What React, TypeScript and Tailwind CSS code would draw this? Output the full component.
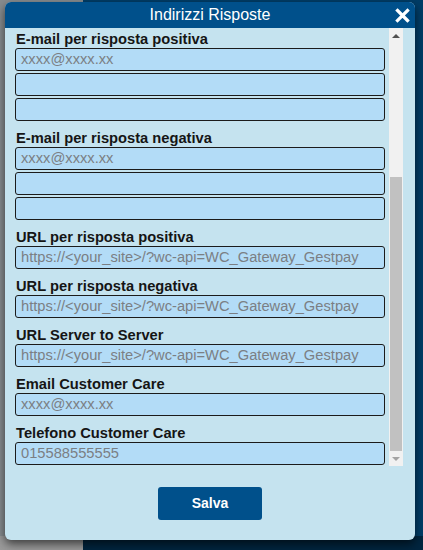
const font = { fontFamily: '"Liberation Sans", Arial, sans-serif' };

const groups: { label: string; inputs: string[] }[] = [
  { label: "E-mail per risposta positiva", inputs: ["xxxx@xxxx.xx", "", ""] },
  { label: "E-mail per risposta negativa", inputs: ["xxxx@xxxx.xx", "", ""] },
  { label: "URL per risposta positiva", inputs: ["https://<your_site>/?wc-api=WC_Gateway_Gestpay"] },
  { label: "URL per risposta negativa", inputs: ["https://<your_site>/?wc-api=WC_Gateway_Gestpay"] },
  { label: "URL Server to Server", inputs: ["https://<your_site>/?wc-api=WC_Gateway_Gestpay"] },
  { label: "Email Customer Care", inputs: ["xxxx@xxxx.xx"] },
  { label: "Telefono Customer Care", inputs: ["015588555555"] },
];

function Input({ placeholder }: { placeholder: string }) {
  return (
    <div className="h-[23px] shrink-0 rounded-[3px] border border-[#1b1b1b] bg-[#b3dcf7] px-[5px] flex items-center text-[14.7px] text-[#7b7f84] whitespace-nowrap overflow-hidden">
      {placeholder}
    </div>
  );
}

function Scrollbar() {
  return (
    <div className="w-[14px] h-[438px] bg-[#f1f1f1] flex flex-col items-center">
      <div className="h-[15px] flex items-center justify-center">
        <div className="w-0 h-0 border-l-[4px] border-r-[4px] border-b-[4px] border-l-transparent border-r-transparent border-b-[#505050]" />
      </div>
      <div className="flex-1 w-full flex flex-col justify-end">
        <div className="h-[274px] w-[12px] mx-auto bg-[#c1c1c1]" />
      </div>
      <div className="h-[15px] flex items-center justify-center">
        <div className="w-0 h-0 border-l-[4px] border-r-[4px] border-t-[4px] border-l-transparent border-r-transparent border-t-[#a3a3a3]" />
      </div>
    </div>
  );
}

export default function App() {
  return (
    <div
      className="relative w-[423px] h-[550px] overflow-hidden bg-[linear-gradient(to_right,#868b8e_83px,#003c66_83px)]"
      style={font}
    >
      <div className="absolute left-0 right-0 bottom-0 h-[14px] bg-[linear-gradient(to_right,#9a9a9a_83px,#00253f_83px)]" />
      <div className="absolute left-[5px] top-[2px] w-[410px] h-[538px] rounded-[6px] bg-[#c5e3ef] shadow-[0_4px_10px_rgba(0,0,0,0.6)] flex flex-col">
        <div className="h-[26px] rounded-t-[6px] bg-[#00508b] relative flex items-center justify-center">
          <span className="text-white text-[16px]">Indirizzi Risposte</span>
          <svg className="absolute right-[5px] top-[6px]" width="15" height="15" viewBox="0 0 15 15">
            <path d="M2.5 2.5 L12.5 12.5 M12.5 2.5 L2.5 12.5" stroke="#fff" strokeWidth="3.2" strokeLinecap="square" />
          </svg>
        </div>
        <div className="flex pl-[10px] pr-[12px] gap-[4px]">
          <div className="w-[370px] h-[438px] overflow-hidden pt-[3px] flex flex-col">
            {groups.map((g, i) => (
              <div key={g.label} className={i === 0 ? "flex flex-col gap-[2px]" : "flex flex-col gap-[2px] pt-[9px]"}>
                <div className="h-[17px] -mb-[2px] leading-[17px] text-[14.7px] font-bold text-[#151515] pl-px whitespace-nowrap">
                  {g.label}
                </div>
                {g.inputs.map((v, j) => (
                  <Input key={j} placeholder={v} />
                ))}
              </div>
            ))}
          </div>
          <Scrollbar />
        </div>
        <div className="flex justify-center pt-[21px]">
          <button className="w-[104px] h-[33px] rounded-[3px] bg-[#00508b] text-white text-[14px] font-bold">
            Salva
          </button>
        </div>
      </div>
    </div>
  );
}
